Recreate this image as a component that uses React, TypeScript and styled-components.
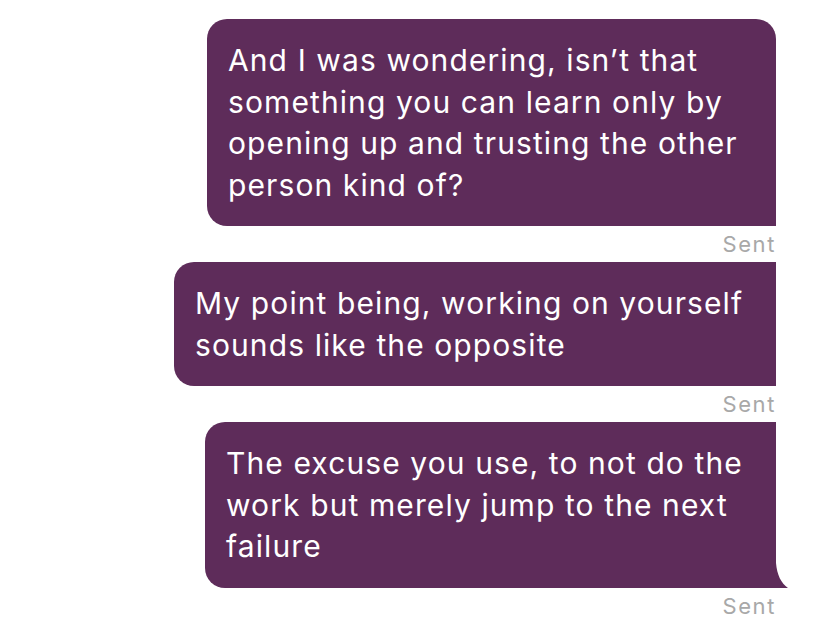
import React from "react";
import styled, { createGlobalStyle } from "styled-components";

const GlobalStyle = createGlobalStyle`
    html, body {
        margin: 0;
        padding: 0;
        background-color: #ffffff;
    }
`

const Thread = styled.div`
    width: 828px;
    height: 626px;
    box-sizing: border-box;
    padding: 19px 52px 0 0;
    display: flex;
    flex-direction: column;
    align-items: flex-end;
    font-family: "Inter", "Liberation Sans", sans-serif;
    overflow: hidden;
`

const Bubble = styled.div<{ $width: number; $roundTop: boolean; $tail: boolean }>`
    position: relative;
    width: ${p => p.$width}px;
    box-sizing: border-box;
    padding: 21px 0 20px 21px;
    background-color: #5e2c5a;
    color: #ffffff;
    font-size: 30px;
    line-height: 41.5px;
    letter-spacing: 1.1px;
    white-space: nowrap;
    border-radius: 20px ${p => (p.$roundTop ? "20px" : "0")} 0 20px;

    svg {
        position: absolute;
        right: -12px;
        bottom: 0;
        display: ${p => (p.$tail ? "block" : "none")};
    }
`

const Status = styled.div`
    height: 36px;
    line-height: 37px;
    font-size: 22px;
    letter-spacing: 1.6px;
    color: #a8a8a8;
    text-align: right;
`

type Msg = { lines: string[]; width: number; roundTop: boolean; tail: boolean };

const messages: Msg[] = [
    {
        lines: [
            "And I was wondering, isn\u2019t that",
            "something you can learn only by",
            "opening up and trusting the other",
            "person kind of?",
        ],
        width: 569,
        roundTop: true,
        tail: false,
    },
    {
        lines: ["My point being, working on yourself", "sounds like the opposite"],
        width: 602,
        roundTop: false,
        tail: false,
    },
    {
        lines: [
            "The excuse you use, to not do the",
            "work but merely jump to the next",
            "failure",
        ],
        width: 571,
        roundTop: false,
        tail: true,
    },
];

const App = () => {
    return (
        <>
            <GlobalStyle />
            <Thread>
                {messages.map((m, i) => (
                    <React.Fragment key={i}>
                        <Bubble $width={m.width} $roundTop={m.roundTop} $tail={m.tail}>
                            {m.lines.map((l, j) => (
                                <div key={j}>{l}</div>
                            ))}
                            <svg width="12" height="25" viewBox="0 0 12 25">
                                <path d="M0 0 C1 12 5 20 12 25 L0 25 Z" fill="#5e2c5a" />
                            </svg>
                        </Bubble>
                        <Status>Sent</Status>
                    </React.Fragment>
                ))}
            </Thread>
        </>
    )
};

export default App;
